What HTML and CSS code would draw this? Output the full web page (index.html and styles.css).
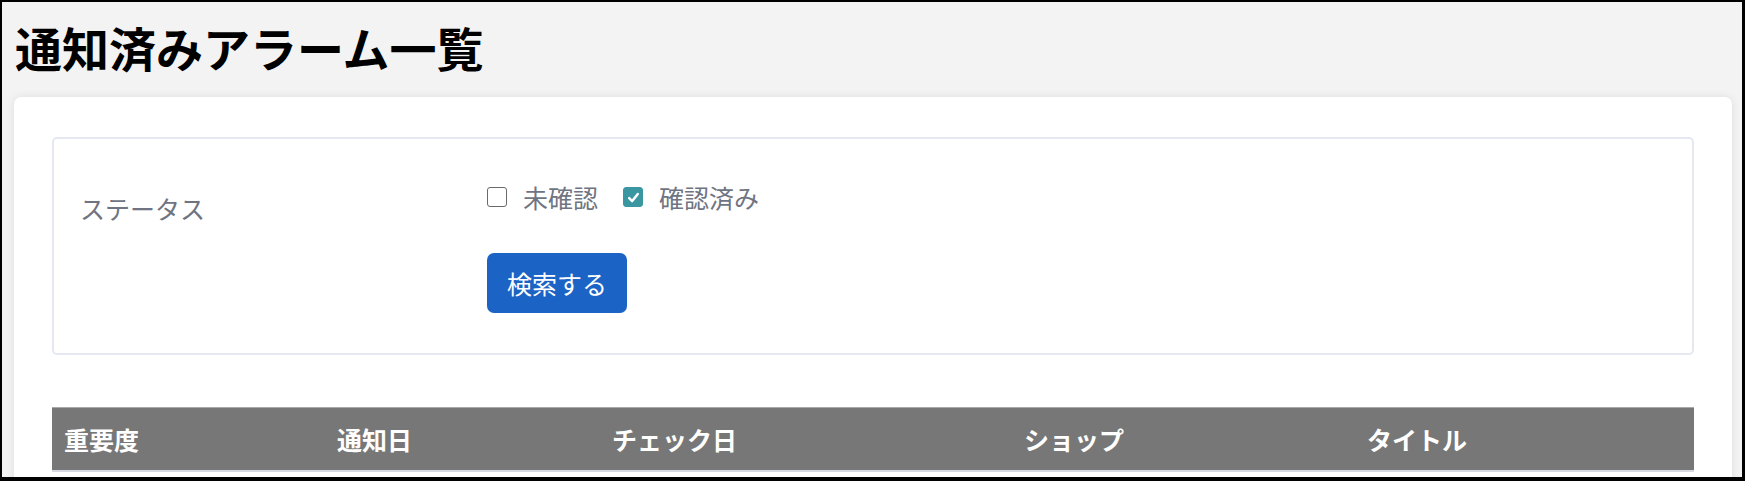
FILE: index.html
```html
<!DOCTYPE html>
<html lang="ja">
<head>
<meta charset="utf-8">
<title>通知済みアラーム一覧</title>
<link rel="stylesheet" href="styles.css">
</head>
<body>
<div class="frame">
  <header class="page-header">
    <h1 class="page-title">通知済みアラーム一覧</h1>
  </header>
  <main class="card">
    <section class="search-box">
      <div class="form-row">
        <div class="form-label">ステータス</div>
        <div class="form-controls">
          <div class="checks">
            <label class="check">
              <span class="check-box"></span>
              <span class="check-text">未確認</span>
            </label>
            <label class="check">
              <span class="check-box is-checked">
                <svg viewBox="0 0 16 16" width="15" height="15"><path d="M3.4 8.6 L6.6 11.8 L12.6 4.2" fill="none" stroke="#fff" stroke-width="2.6" stroke-linecap="round" stroke-linejoin="round"/></svg>
              </span>
              <span class="check-text">確認済み</span>
            </label>
          </div>
          <button class="btn-search" type="button">検索する</button>
        </div>
      </div>
    </section>
    <table class="alarm-table">
      <thead>
        <tr>
          <th class="col-level">重要度</th>
          <th class="col-notified">通知日</th>
          <th class="col-checked">チェック日</th>
          <th class="col-shop">ショップ</th>
          <th class="col-title">タイトル</th>
        </tr>
      </thead>
    </table>
  </main>
</div>
</body>
</html>
```

FILE: styles.css
```css
* { box-sizing: border-box; }

html, body {
  margin: 0;
  padding: 0;
}

body {
  font-family: "Noto Sans CJK JP", "Noto Sans", sans-serif;
  background: #000;
}

.frame {
  width: 1745px;
  height: 481px;
  border-style: solid;
  border-color: #000;
  border-width: 2px 3px 4px 2px;
  background: #f3f3f3;
  overflow: hidden;
}

.page-header {
  height: 95px;
  display: flex;
  align-items: center;
  padding: 0 13px 4px;
}

.page-title {
  margin: 0;
  font-size: 47px;
  font-weight: 700;
  line-height: 1.2;
  color: #000;
}

.card {
  margin: 0 10px 0 12px;
  background: #fff;
  border-radius: 7px;
  box-shadow: 0 0 8px rgba(0, 0, 0, 0.09);
  padding: 40px 38px 40px 38px;
  min-height: 400px;
}

.search-box {
  border: 2px solid #e5e7f2;
  border-radius: 5px;
  height: 218px;
}

.form-row {
  display: grid;
  grid-template-columns: 433px 1fr;
}

.form-label {
  padding: 51px 0 0 26px;
  font-size: 25px;
  line-height: 36px;
  color: #6f7482;
}

.form-controls {
  padding-top: 40px;
}

.checks {
  display: flex;
  align-items: center;
  height: 36px;
}

.check {
  display: flex;
  align-items: center;
  margin-right: 25px;
  font-size: 25px;
  line-height: 36px;
  color: #6f7482;
}

.check-box {
  width: 20px;
  height: 20px;
  border: 1.5px solid #6a6a6a;
  border-radius: 3px;
  margin-right: 16px;
  display: flex;
  align-items: center;
  justify-content: center;
  background: #fff;
}

.check-box.is-checked {
  background: #3a97a2;
  border-color: #3a97a2;
}

.btn-search {
  margin-top: 38px;
  font-family: inherit;
  font-size: 25px;
  line-height: 36px;
  color: #fff;
  background: #1c63c6;
  border: none;
  border-radius: 7px;
  padding: 12px 20px;
}

.alarm-table {
  margin-top: 52px;
  width: 100%;
  border-collapse: collapse;
  table-layout: fixed;
}

.alarm-table th {
  background: #777777;
  color: #fff;
  font-size: 25px;
  font-weight: 700;
  text-align: left;
  height: 63px;
  padding: 0 12px;
  border-top: 1px solid #a8a8a8;
  border-bottom: 2px solid #d6d9e2;
}

.col-level { width: 273px; }
.col-notified { width: 275px; }
.col-checked { width: 412px; }
.col-shop { width: 343px; }
.col-title { width: 339px; }
```
